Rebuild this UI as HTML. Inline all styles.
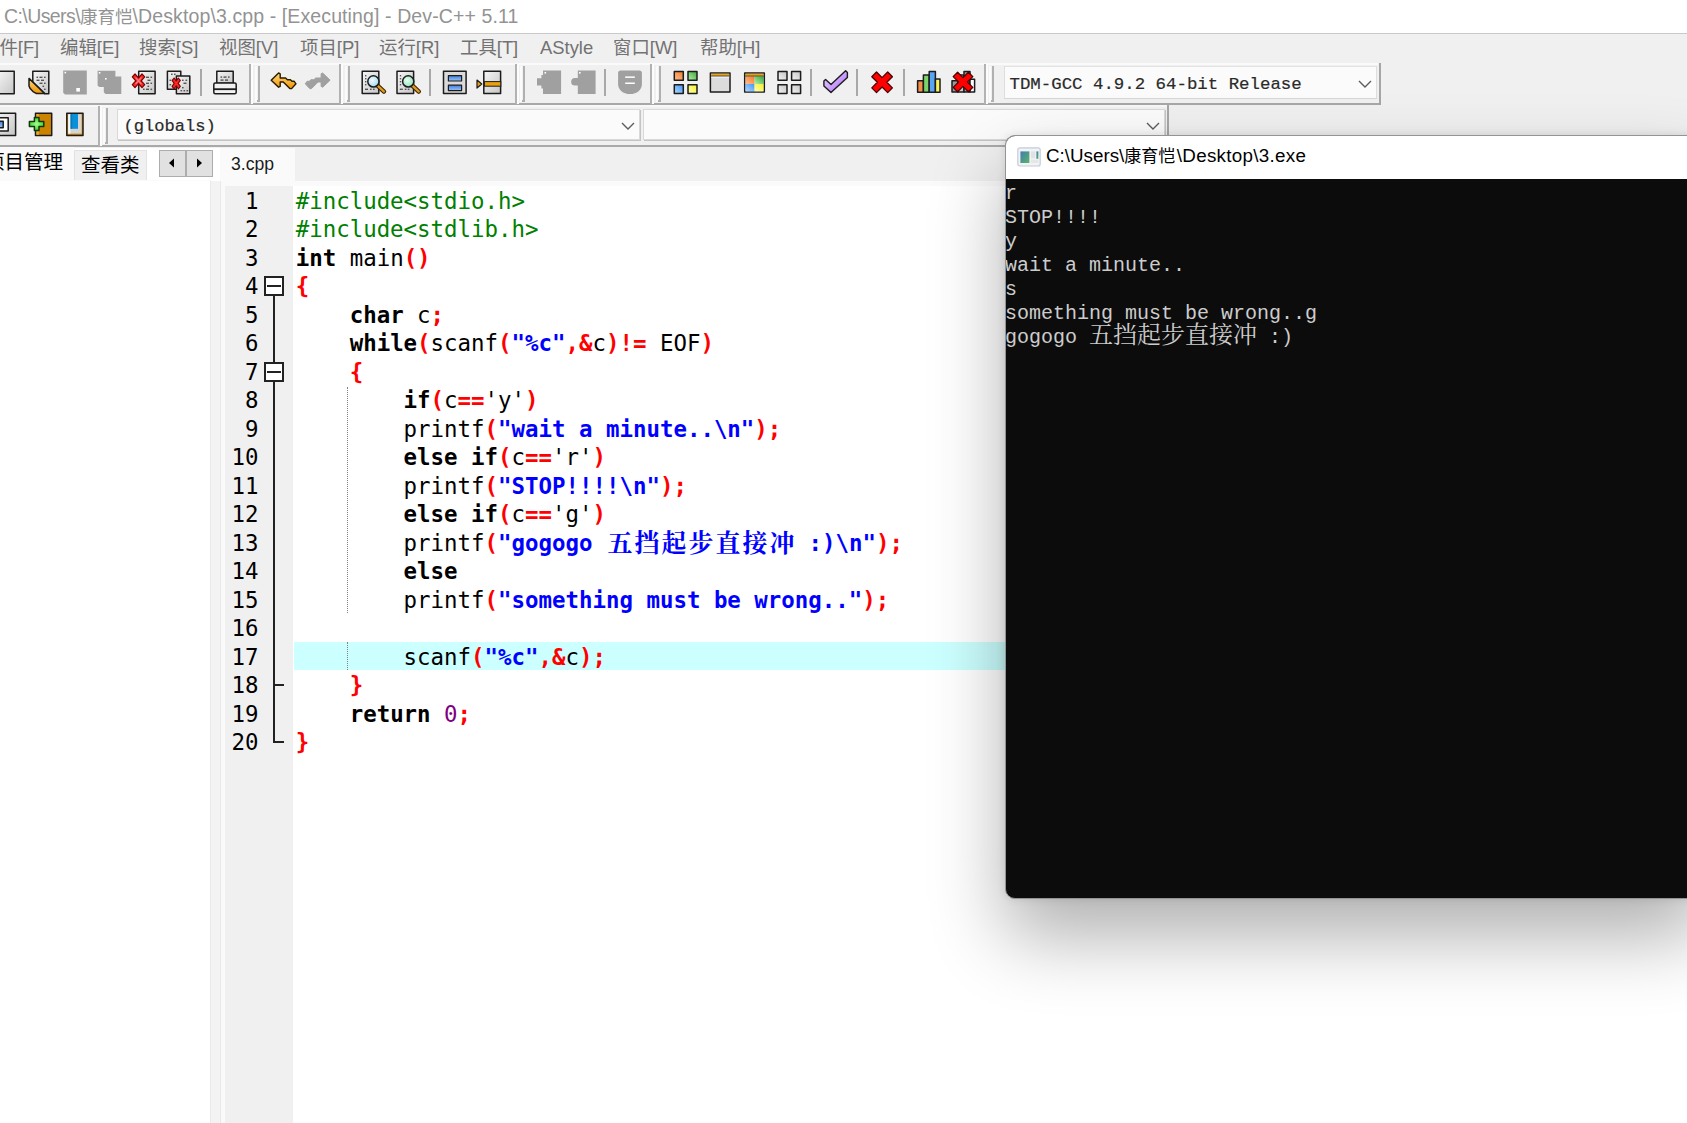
<!DOCTYPE html>
<html lang="zh-CN">
<head>
<meta charset="utf-8">
<title>Dev-C++ 5.11</title>
<style>
html,body{margin:0;padding:0}
body{width:1687px;height:1123px;overflow:hidden;position:relative;background:#fff;font-family:"Liberation Sans","Noto Sans CJK SC",sans-serif}
.abs{position:absolute}
#title{position:absolute;left:0;top:0;width:1687px;height:33px;background:#fff}
#title span{position:absolute;left:4px;top:3px;font-size:19.5px;line-height:26px;color:#939393;white-space:pre}
#chrome{position:absolute;left:0;top:33px;width:1687px;height:114px;background:#f0f0f0;border-top:1px solid #c9c9c9}
#title i,#contitle i{font-style:normal}
#title .tc{font-size:17.5px}
#contitle .tc{font-size:17px}
#menu{position:absolute;left:0;top:34px;height:29px;width:900px;font-size:18.4px;line-height:28px;color:#727272;white-space:pre}
#menu span{position:absolute;top:0}
.hl{position:absolute;height:1px}
.vl{position:absolute;width:1px}
.grip{position:absolute;width:5px;height:36px;border-left:2px solid #fbfbfb;border-right:2px solid #b0b0b0;box-sizing:border-box}
.grip:after{content:"";position:absolute;left:0;bottom:0;width:2px;height:2px;background:#b0b0b0}
.ico{position:absolute;width:24px;height:24px}
.sep{position:absolute;width:2px;height:27px;background:#a8a8a8}
.combo{position:absolute;background:#fbfbfb;border:1px solid #d9d9d9;box-sizing:border-box;font-family:"Liberation Mono",monospace;font-weight:normal;font-size:15px;color:#2a2a2a;white-space:pre;-webkit-text-stroke:0.2px #2a2a2a}
.combo span{position:absolute;left:8px;top:0;line-height:28px}
#left{position:absolute;left:0;top:181px;width:210px;height:942px;background:#fff}
#split{position:absolute;left:210px;top:181px;width:11px;height:942px;background:#f3f3f3;border-left:1.5px solid #e9e9e9;border-right:1.5px solid #e9e9e9;box-sizing:border-box}
#split2{position:absolute;left:220.5px;top:148px;width:5px;height:975px;background:#fafafa}
#gutter{position:absolute;left:225px;top:186px;width:67.5px;height:937px;background:#f0f0f0}
#editor{position:absolute;left:292.5px;top:186px;width:1400px;height:937px;background:#fff}
#cur{position:absolute;left:294px;top:642px;width:1400px;height:28px;background:#ccffff}
.ln,.num{position:absolute;font-family:"DejaVu Sans Mono","Noto Sans CJK SC",monospace;font-size:22.425px;line-height:28px;height:28px;white-space:pre;color:#000}
.ln{left:295.7px}
.num{left:225px;width:33.5px;text-align:right}
.k{color:#000}
.s{color:#ff0000}
.q{color:#0000ff}
.p{color:#008000}
.n{color:#800080}
.cj{font-family:"Noto Serif CJK SC",serif;font-size:25px;letter-spacing:2px;font-weight:bold;line-height:0;position:relative;top:1px;left:1.5px}
#con{position:absolute;left:1005px;top:134.5px;width:700px;height:764.5px;background:#0c0c0c;border:1px solid #949494;border-radius:10px;box-sizing:border-box;overflow:hidden;box-shadow:0 38px 74px rgba(0,0,0,.31),0 0 8px rgba(0,0,0,.1)}
#contitle{position:absolute;left:0;top:0;width:100%;height:43px;background:#fff}
#contitle span{position:absolute;left:40px;top:8.5px;font-size:18.8px;line-height:24px;color:#000;white-space:pre}
#conout{position:absolute;left:-1px;top:46.5px;font-family:"Liberation Mono","Noto Serif CJK SC",monospace;font-size:20px;line-height:24px;color:#cccccc;white-space:pre}
#conout .cj{font-family:"Noto Serif CJK SC",serif;font-size:24px;font-weight:normal;letter-spacing:0;line-height:0;position:static}
</style>
</head>
<body>
<div id="title"><span><i style="letter-spacing:-0.58px">C:\Users\</i><i class="tc">康育恺</i><i style="letter-spacing:0.11px">\Desktop\3.cpp - [Executing] - Dev-C++ 5.11</i></span></div>
<div id="chrome"></div>
<div id="menu"><span style="left:-19px">文件[F]</span><span style="left:60px">编辑[E]</span><span style="left:139px">搜索[S]</span><span style="left:219px">视图[V]</span><span style="left:300px">项目[P]</span><span style="left:379px">运行[R]</span><span style="left:460px">工具[T]</span><span style="left:540px">AStyle</span><span style="left:613px">窗口[W]</span><span style="left:700px">帮助[H]</span></div>
<!-- toolbar rows -->
<div class="hl" style="left:0;top:63px;width:1378px;height:2px;background:#fafafa"></div>
<div class="hl" style="left:0;top:103px;width:1380px;height:2px;background:#a8a8a8"></div>
<div class="hl" style="left:0;top:105px;width:1167px;height:2px;background:#f8f8f8"></div>
<div class="hl" style="left:0;top:145px;width:1687px;height:2px;background:#a9a9a9"></div>
<!-- band ends row 1 -->
<div class="vl" style="left:249px;top:64px;width:2px;height:40px;background:#b2b2b2"></div><div class="vl" style="left:251px;top:64px;width:1.5px;height:40px;background:#fcfcfc"></div>
<div class="vl" style="left:339px;top:64px;width:2px;height:40px;background:#b2b2b2"></div><div class="vl" style="left:341px;top:64px;width:1.5px;height:40px;background:#fcfcfc"></div>
<div class="vl" style="left:515px;top:64px;width:2px;height:40px;background:#b2b2b2"></div><div class="vl" style="left:517px;top:64px;width:1.5px;height:40px;background:#fcfcfc"></div>
<div class="vl" style="left:650px;top:64px;width:2px;height:40px;background:#b2b2b2"></div><div class="vl" style="left:652px;top:64px;width:1.5px;height:40px;background:#fcfcfc"></div>
<div class="vl" style="left:984px;top:64px;width:2px;height:40px;background:#b2b2b2"></div><div class="vl" style="left:986px;top:64px;width:1.5px;height:40px;background:#fcfcfc"></div>
<div class="vl" style="left:1378.5px;top:63px;width:2px;height:42px;background:#a6a6a6"></div>
<!-- band ends row 2 -->
<div class="vl" style="left:98px;top:106px;width:2px;height:40px;background:#b2b2b2"></div><div class="vl" style="left:100px;top:106px;width:1.5px;height:40px;background:#fcfcfc"></div>
<div class="vl" style="left:1166.5px;top:105px;width:2px;height:41px;background:#a6a6a6"></div>
<!-- grips -->
<div class="grip" style="left:255px;top:66px"></div>
<div class="grip" style="left:344.5px;top:66px"></div>
<div class="grip" style="left:520px;top:66px"></div>
<div class="grip" style="left:656px;top:66px"></div>
<div class="grip" style="left:989px;top:66px"></div>
<div class="grip" style="left:103px;top:108px"></div>
<!-- separators -->
<div class="sep" style="left:200px;top:69px"></div>
<div class="sep" style="left:429px;top:69px"></div>
<div class="sep" style="left:604px;top:69px"></div>
<div class="sep" style="left:810px;top:69px"></div>
<div class="sep" style="left:856px;top:69px"></div>
<div class="sep" style="left:903px;top:69px"></div>
<!-- combos -->
<div class="combo" style="left:1003.5px;top:66px;width:373px;height:33px;border-color:#e2e2e2 #dedede #d6d6d6 #dedede"><span style="left:5px;top:3.5px;font-size:17.4px">TDM-GCC 4.9.2 64-bit Release</span><svg class="abs" style="left:353px;top:13px" width="14" height="9" viewBox="0 0 14 9"><path d="M1 1 L7 7 L13 1" fill="none" stroke="#5c5c5c" stroke-width="1.4"/></svg></div>
<div class="combo" style="left:117px;top:109px;width:523px;height:31px;box-shadow:1px 1px 0 #c4c4c4"><span style="left:5.5px;top:2.5px;font-size:17.1px">(globals)</span><svg class="abs" style="left:503px;top:12px" width="14" height="9" viewBox="0 0 14 9"><path d="M1 1 L7 7 L13 1" fill="none" stroke="#5c5c5c" stroke-width="1.4"/></svg></div>
<div class="combo" style="left:643px;top:109px;width:522px;height:31px;box-shadow:1px 1px 0 #c4c4c4"><svg class="abs" style="left:502px;top:12px" width="14" height="9" viewBox="0 0 14 9"><path d="M1 1 L7 7 L13 1" fill="none" stroke="#5c5c5c" stroke-width="1.4"/></svg></div>
<svg class="abs" style="left:0;top:63px" width="1000" height="84" viewBox="0 63 1000 84">
<defs>
<linearGradient id="gDoc" x1="0" y1="0" x2="1" y2="1"><stop offset="0" stop-color="#f6f6f6"/><stop offset="1" stop-color="#c6c6c6"/></linearGradient>
<linearGradient id="gOr" x1="0" y1="0" x2="0" y2="1"><stop offset="0" stop-color="#ffd880"/><stop offset="1" stop-color="#f09400"/></linearGradient>
<linearGradient id="gBlue" x1="0" y1="0" x2="0" y2="1"><stop offset="0" stop-color="#3f7fe0"/><stop offset="1" stop-color="#9cc4f8"/></linearGradient>
<radialGradient id="gLensB" cx=".4" cy=".4" r=".7"><stop offset="0" stop-color="#f2fbff"/><stop offset="1" stop-color="#9ad6ee"/></radialGradient>
<radialGradient id="gLensG" cx=".4" cy=".4" r=".7"><stop offset="0" stop-color="#e8fff2"/><stop offset="1" stop-color="#86e0b2"/></radialGradient>
<linearGradient id="sqO" x1="1" y1="0" x2="0" y2="1"><stop offset="0" stop-color="#f47a2a"/><stop offset="1" stop-color="#ffc090"/></linearGradient>
<linearGradient id="sqG" x1="1" y1="0" x2="0" y2="1"><stop offset="0" stop-color="#3aa838"/><stop offset="1" stop-color="#b4f0a8"/></linearGradient>
<linearGradient id="sqB" x1="1" y1="0" x2="0" y2="1"><stop offset="0" stop-color="#3f96f4"/><stop offset="1" stop-color="#b4d8ff"/></linearGradient>
<linearGradient id="sqY" x1="1" y1="0" x2="0" y2="1"><stop offset="0" stop-color="#f4f030"/><stop offset="1" stop-color="#ffffa8"/></linearGradient>
<linearGradient id="sqW" x1="1" y1="0" x2="0" y2="1"><stop offset="0" stop-color="#c4c4c4"/><stop offset="1" stop-color="#f4f4f4"/></linearGradient>
<linearGradient id="gChk" x1="0" y1="0" x2="1" y2="1"><stop offset="0" stop-color="#e6ccff"/><stop offset=".45" stop-color="#d0a8ff"/><stop offset="1" stop-color="#a860f8"/></linearGradient>
<radialGradient id="gPlus" cx=".5" cy=".5" r=".6"><stop offset="0" stop-color="#a0ff90"/><stop offset="1" stop-color="#2fc81a"/></radialGradient>
</defs>
<g stroke="#1c1c1c" stroke-width="1.5" stroke-linejoin="round">
<!-- 1 new -->
<rect x="-3" y="71.2" width="17.2" height="22.5" fill="url(#gDoc)"/>
<!-- 2 open -->
<path d="M32.8 82 V71.2 H48.8 V93.7 H44.6 Z" fill="url(#gDoc)"/>
<path d="M29 78.4 L44.8 93.6 L36.6 93.6 L33 91.6 L30.2 88.6 L29 86 Z" fill="url(#gOr)"/>
<!-- 5 close -->
<rect x="138.7" y="71.2" width="16.4" height="22.5" fill="url(#gDoc)"/>
<!-- 6 close all -->
<rect x="167.4" y="71.2" width="13.4" height="18" fill="url(#gDoc)"/>
<rect x="176.4" y="76" width="13.4" height="17.7" fill="url(#gDoc)"/>
<!-- 7 print -->
<rect x="216.8" y="71.2" width="16.4" height="12" fill="url(#gDoc)"/>
<rect x="213.8" y="83" width="22.4" height="10.8" rx="1.5" fill="#f2f2f2"/>
<path d="M214 89.2 H236" fill="none" stroke-width="1.8"/>
<!-- 10 search -->
<rect x="362.2" y="71.2" width="16.6" height="22.2" fill="url(#gDoc)"/>
<rect x="397" y="71.2" width="16.6" height="22.2" fill="url(#gDoc)"/>
<!-- 12 bars -->
<rect x="443.5" y="71.2" width="22.6" height="22.2" fill="#dadada"/>
<rect x="448.4" y="75.6" width="13.2" height="5.4" fill="url(#gBlue)" stroke-width="1.2"/>
<rect x="448.4" y="85.2" width="13.2" height="5.4" fill="url(#gBlue)" stroke-width="1.2"/>
<!-- 13 goto -->
<rect x="483.8" y="71.2" width="16.8" height="22.2" fill="url(#gDoc)"/>
<!-- compile 4 squares -->
<rect x="674.3" y="71.4" width="9" height="8.8" fill="url(#sqO)"/>
<rect x="688" y="71.4" width="9" height="8.8" fill="url(#sqG)"/>
<rect x="674.3" y="84.8" width="9" height="8.8" fill="url(#sqB)"/>
<rect x="688" y="84.8" width="9" height="8.8" fill="url(#sqY)"/>
<!-- run window -->
<rect x="710.4" y="72.9" width="19.6" height="19.2" fill="#dcdcdc"/>
<!-- compile run -->
<rect x="744.7" y="72.9" width="19.6" height="19.2" fill="#dcdcdc"/>
<!-- rebuild -->
<rect x="778" y="71.4" width="9" height="8.8" fill="url(#sqW)"/>
<rect x="791.6" y="71.4" width="9" height="8.8" fill="url(#sqW)"/>
<rect x="778" y="84.8" width="9" height="8.8" fill="url(#sqW)"/>
<rect x="791.6" y="84.8" width="9" height="8.8" fill="url(#sqW)"/>
<!-- check -->
<path d="M823.9 81 L825.6 79.4 L831 84.6 L845.6 70.7 L847.4 72.6 L847.4 77.4 L831 92.5 L823.9 86 Z" fill="url(#gChk)" stroke-width="1.4"/>
<!-- chart -->
<rect x="917.6" y="80.8" width="5.8" height="11.4" fill="#f59048"/>
<rect x="923.4" y="75" width="5.8" height="17.2" fill="#7ad468"/>
<rect x="929.2" y="71.5" width="6.2" height="20.7" fill="#5aa4f4"/>
<rect x="935.4" y="79" width="4.6" height="13.2" fill="#f8f458"/>
<!-- chart x -->
<rect x="952" y="80.8" width="6" height="11.2" fill="#9a9a9a"/>
<rect x="958" y="75" width="6" height="17" fill="#c8c8c8"/>
<rect x="964" y="71.4" width="6" height="20.6" fill="#9a9a9a"/>
<rect x="970" y="79.2" width="4.6" height="12.8" fill="#ffffff"/>
<!-- row2 A -->
<rect x="-8" y="113.2" width="23.6" height="22.4" fill="url(#gDoc)"/>
<rect x="-8" y="117.8" width="16.2" height="13.2" fill="#fff"/>
<rect x="-8" y="121.2" width="11.2" height="6.6" fill="url(#gBlue)"/>
<!-- row2 B book -->
<rect x="35.5" y="113.2" width="16.2" height="22.4" fill="#cc8400"/>
<!-- row2 C bookmark -->
<rect x="66.8" y="113.2" width="16.2" height="22.4" fill="#d68c00"/>
</g>
<!-- open: doc text dots -->
<g fill="#555">
<rect x="36.5" y="76.6" width="1.6" height="1.4"/><rect x="39.5" y="76.6" width="3" height="1.4"/><rect x="44" y="76.6" width="1.6" height="1.4"/>
<rect x="36.5" y="79.6" width="3" height="1.4"/><rect x="41" y="79.6" width="3" height="1.4"/>
<rect x="39.5" y="82.6" width="3" height="1.4"/><rect x="44" y="82.6" width="1.6" height="1.4"/>
<rect x="42.5" y="85.6" width="1.6" height="1.4"/><rect x="44" y="88.6" width="1.6" height="1.4"/>
<!-- close doc dots -->
<rect x="146" y="76.6" width="3" height="1.4"/><rect x="150.5" y="76.6" width="1.6" height="1.4"/>
<rect x="147.5" y="79.6" width="3" height="1.4"/>
<rect x="146" y="82.6" width="3" height="1.4"/><rect x="150.5" y="82.6" width="1.6" height="1.4"/>
<rect x="147.5" y="85.6" width="1.6" height="1.4"/>
<rect x="143" y="88.6" width="1.6" height="1.4"/><rect x="146" y="88.6" width="3" height="1.4"/><rect x="150.5" y="88.6" width="1.6" height="1.4"/>
<!-- close all dots -->
<rect x="171" y="73.6" width="1.6" height="1.4"/><rect x="174" y="73.6" width="1.6" height="1.4"/>
<rect x="169.5" y="79.6" width="1.6" height="1.4"/><rect x="169.5" y="84" width="1.6" height="1.4"/>
<rect x="182" y="79.6" width="1.6" height="1.4"/><rect x="185.5" y="79.6" width="1.6" height="1.4"/>
<rect x="183.5" y="82.6" width="3" height="1.4"/>
<rect x="182" y="87" width="1.6" height="1.4"/>
<rect x="180.5" y="90" width="1.6" height="1.4"/><rect x="183.5" y="90" width="1.6" height="1.4"/><rect x="186.5" y="90" width="1.6" height="1.4"/>
<!-- print dots -->
<rect x="220.5" y="76.4" width="1.6" height="1.4"/><rect x="223.5" y="76.4" width="3" height="1.4"/><rect x="228" y="76.4" width="1.6" height="1.4"/>
<rect x="220.5" y="79.4" width="3" height="1.4"/><rect x="225" y="79.4" width="3" height="1.4"/>
<!-- search dots -->
<rect x="365" y="75" width="1.4" height="1.4"/><rect x="365" y="78" width="1.4" height="1.4"/><rect x="365" y="81" width="1.4" height="1.4"/><rect x="365" y="84" width="1.4" height="1.4"/>
<rect x="365" y="88.6" width="3" height="1.4"/><rect x="370" y="88.6" width="1.6" height="1.4"/><rect x="373" y="88.6" width="1.6" height="1.4"/>
<rect x="399.8" y="75" width="1.4" height="1.4"/><rect x="399.8" y="78" width="1.4" height="1.4"/><rect x="399.8" y="81" width="1.4" height="1.4"/><rect x="399.8" y="84" width="1.4" height="1.4"/>
<rect x="399.8" y="88.6" width="3" height="1.4"/><rect x="404.8" y="88.6" width="1.6" height="1.4"/><rect x="407.8" y="88.6" width="1.6" height="1.4"/>
</g>
<!-- save disabled -->
<g fill="#a0a0a0">
<path d="M63.2 70.4 H86.8 V94.5 H65 L63.2 92.7 Z"/>
<path d="M97.6 70.7 H115.4 V76.6 H121.3 V94 H105.5 L103.8 92.3 V87 H99.2 L97.6 85.4 Z"/>
<!-- redo -->
<path transform="translate(601.3,0) scale(-1,1)" d="M271.2 80.2 L278.6 73 L280.2 73.8 L280.2 78 L285.6 78 L287.4 79.7 L290.4 79.7 L292 81.3 L294.2 81.3 L296 83.8 L291.6 88.6 L289.8 88.6 L284.8 83.6 L283.2 82 L280.2 82 L280.2 86.4 L278.6 87.2 Z" stroke="#a0a0a0" stroke-width="1" stroke-linejoin="round"/>
<!-- disabled bookmark icons -->
<path d="M543 70.4 H561.1 V94.1 H543 V88.4 L541.4 88.4 L541.4 85.4 L537 85.4 V78.2 L541.4 78.2 L541.4 75 L543 75 Z"/>
<path d="M577.8 70.4 H595.6 V94.1 H577.8 V85.6 H575 A3.85 3.85 0 0 1 575 77.9 H577.8 Z"/>
<path d="M618.1 73 A2.6 2.6 0 0 1 620.7 70.4 H639.3 A2.6 2.6 0 0 1 641.9 73 V84 C641.9 90 637 94.1 630 94.1 C623 94.1 618.1 90 618.1 84 Z"/>
</g>
<g fill="#fff">
<rect x="64.5" y="71.8" width="1.6" height="1.6"/><rect x="76.3" y="88" width="3.6" height="3.6"/>
<rect x="98.8" y="72" width="1.6" height="1.6"/><rect x="105" y="78" width="1.6" height="1.6"/>
<rect x="544.5" y="72" width="1.6" height="1.6"/><rect x="579" y="72" width="1.6" height="1.6"/>
<rect x="625.2" y="76.4" width="9.6" height="1.5"/><rect x="625.2" y="82.5" width="9.6" height="1.5"/>
</g>
<!-- red X on close -->
<g stroke-linejoin="round">
<path d="M132.3 76.9 L135.0 74.0 L138.5 77.9 L142.0 74.0 L144.7 76.9 L141.2 80.8 L144.7 84.7 L142.0 87.6 L138.5 83.7 L135.0 87.6 L132.3 84.7 L135.8 80.8 Z" fill="#ff2626" stroke="#7a0000" stroke-width="1.2"/>
<path d="M135.6 77.6 L141.4 84 M141.4 77.6 L135.6 84" stroke="#ff8080" stroke-width="1.3" fill="none"/>
<path d="M172.1 80.4 L174.1 78.0 L176.2 81.0 L178.3 78.0 L180.3 80.4 L178.2 83.4 L180.3 86.4 L178.3 88.8 L176.2 85.8 L174.1 88.8 L172.1 86.4 L174.2 83.4 Z" fill="#ff2626" stroke="#7a0000" stroke-width="1.1"/>
<!-- big red X -->
<path d="M871.8 76.7 L876.5 72.0 L882.1 77.6 L887.7 72.0 L892.4 76.7 L886.8 82.3 L892.4 87.9 L887.7 92.6 L882.1 87.0 L876.5 92.6 L871.8 87.9 L877.4 82.3 Z" fill="#ff0000" stroke="#4a0000" stroke-width="1.3"/>
<!-- chart X -->
<path d="M953.2 76.6 L957.6 72.2 L963.0 77.6 L968.4 72.2 L972.8 76.6 L967.4 82.0 L972.8 87.4 L968.4 91.8 L963.0 86.4 L957.6 91.8 L953.2 87.4 L958.6 82.0 Z" fill="#ff0000" stroke="#4a0000" stroke-width="1.3"/>
</g>
<!-- undo -->
<path d="M271.2 80.2 L278.6 73 L280.2 73.8 L280.2 78 L285.6 78 L287.4 79.7 L290.4 79.7 L292 81.3 L294.2 81.3 L296 83.8 L291.6 88.6 L289.8 88.6 L284.8 83.6 L283.2 82 L280.2 82 L280.2 86.4 L278.6 87.2 Z" fill="url(#gOr)" stroke="#2a1a00" stroke-width="1.4" stroke-linejoin="round"/>
<!-- lenses -->
<g stroke="#1c1c1c">
<path d="M377.6 85.6 L384 91.6" stroke="#3a2400" stroke-width="4.4" stroke-linecap="round"/>
<path d="M377.6 85.6 L384 91.6" stroke="#e09a20" stroke-width="2.2" stroke-linecap="round"/>
<circle cx="373.4" cy="81.4" r="5.6" fill="url(#gLensB)" stroke-width="1.5"/>
<path d="M412.4 85.6 L418.8 91.6" stroke="#3a2400" stroke-width="4.4" stroke-linecap="round"/>
<path d="M412.4 85.6 L418.8 91.6" stroke="#e09a20" stroke-width="2.2" stroke-linecap="round"/>
<circle cx="408.2" cy="81.4" r="5.6" fill="url(#gLensG)" stroke-width="1.5"/>
</g>
<!-- goto line bar -->
<rect x="484.4" y="81.6" width="16.4" height="4.6" fill="#e8a010" stroke="#1c1c1c" stroke-width="1"/>
<path d="M477 80 L481.8 84 L477 88 Z" fill="#e8a010" stroke="#1c1c1c" stroke-width="1.2" stroke-linejoin="round"/>
<!-- run window title -->
<rect x="711.2" y="73.7" width="18" height="1.9" fill="#f0a000"/>
<rect x="711.2" y="75.6" width="18" height="1" fill="#1c1c1c"/>
<rect x="711.2" y="76.6" width="18" height="1" fill="#f8f8f8"/>
<rect x="745.5" y="73.7" width="18" height="1.9" fill="#f0a000"/>
<rect x="745.5" y="75.6" width="18" height="1" fill="#1c1c1c"/>
<rect x="745.5" y="76.6" width="9" height="7.4" fill="url(#sqO)"/>
<rect x="754.5" y="76.6" width="9" height="7.4" fill="url(#sqG)"/>
<rect x="745.5" y="84" width="9" height="7.4" fill="url(#sqB)"/>
<rect x="754.5" y="84" width="9" height="7.4" fill="url(#sqY)"/>
<!-- book + plus -->
<rect x="36.4" y="114" width="2.4" height="20.8" fill="#e8a838"/>
<path d="M34.4 117.6 H39 V121.6 H43.8 V126.4 H39 V130.4 H34.4 V126.4 H29.4 V121.6 H34.4 Z" fill="url(#gPlus)" stroke="#123808" stroke-width="1.5" stroke-linejoin="round"/>
<!-- bookmark inner -->
<path d="M68.2 114.2 H81.6 V133.6 H68.2 Z" fill="#d4d4d4"/>
<path d="M68.2 114.2 H70.4 V133.6 H68.2 Z" fill="#f6f6f6"/>
<rect x="70.6" y="114" width="7.4" height="14.8" fill="#0a90d8"/>
<rect x="70.6" y="114" width="1.6" height="14.8" fill="#0878b8"/>
</svg>


<!-- left tabs -->
<div class="abs" style="left:0;top:147px;width:74px;height:36px;background:#fafafa"></div>
<div class="abs" style="left:74px;top:180px;width:138px;height:1px;background:#fafafa"></div>
<div class="abs" style="left:-15px;top:149px;font-size:19.5px;line-height:26px;color:#000;white-space:pre">项目管理</div>
<div class="abs" style="left:74px;top:150px;width:73px;height:30px;background:#f0f0f0;border:1px solid #e2e2e2;border-bottom:none;box-sizing:border-box"></div>
<div class="abs" style="left:81px;top:152px;font-size:19.5px;line-height:26px;color:#000;white-space:pre">查看类</div>
<div class="abs" style="left:159px;top:150px;width:54px;height:27px;background:#e1e1e1;border:1px solid #adadad;box-sizing:border-box"></div>
<div class="abs" style="left:185px;top:150px;width:2px;height:27px;background:#adadad"></div>
<svg class="abs" style="left:168px;top:158px" width="8" height="10" viewBox="0 0 8 10"><path d="M6 0.5 L1 5 L6 9.5Z" fill="#000"/></svg>
<svg class="abs" style="left:195px;top:158px" width="8" height="10" viewBox="0 0 8 10"><path d="M2 0.5 L7 5 L2 9.5Z" fill="#000"/></svg>
<!-- editor tab -->
<div class="abs" style="left:220px;top:148px;width:1500px;height:36px;background:#f0f0f0"></div>
<div class="abs" style="left:220px;top:148px;width:75px;height:38px;background:#fafafa"></div>
<div class="abs" style="left:295px;top:181px;width:1400px;height:5px;background:#fafafa"></div>
<div class="abs" style="left:231px;top:151px;font-size:17.6px;line-height:26px;color:#1a1a1a;white-space:pre">3.cpp</div>

<div id="left"></div>
<div id="split"></div>
<div id="split2"></div>
<div id="gutter"></div>
<div id="editor"></div>
<div id="cur"></div>
<div class="abs" style="left:273px;top:286px;width:2px;height:457px;background:#222"></div>
<div class="abs" style="left:264px;top:276px;width:20px;height:20px;border:2px solid #222;background:#fff;box-sizing:border-box"></div>
<div class="abs" style="left:267px;top:285px;width:14px;height:2px;background:#222"></div>
<div class="abs" style="left:264px;top:361.5px;width:20px;height:20px;border:2px solid #222;background:#fff;box-sizing:border-box"></div>
<div class="abs" style="left:267px;top:370.5px;width:14px;height:2px;background:#222"></div>
<div class="abs" style="left:273px;top:684px;width:11px;height:2px;background:#222"></div>
<div class="abs" style="left:273px;top:741px;width:11px;height:2px;background:#222"></div>
<div class="abs" style="left:347px;top:387px;width:0;height:226px;border-left:1px dotted #808080"></div>
<div class="abs" style="left:347px;top:642px;width:0;height:28px;border-left:1px dotted #808080"></div>

<div class="num" style="top:186.80px">1</div>
<div class="num" style="top:215.30px">2</div>
<div class="num" style="top:243.80px">3</div>
<div class="num" style="top:272.30px">4</div>
<div class="num" style="top:300.80px">5</div>
<div class="num" style="top:329.30px">6</div>
<div class="num" style="top:357.80px">7</div>
<div class="num" style="top:386.30px">8</div>
<div class="num" style="top:414.80px">9</div>
<div class="num" style="top:443.30px">10</div>
<div class="num" style="top:471.80px">11</div>
<div class="num" style="top:500.30px">12</div>
<div class="num" style="top:528.80px">13</div>
<div class="num" style="top:557.30px">14</div>
<div class="num" style="top:585.80px">15</div>
<div class="num" style="top:614.30px">16</div>
<div class="num" style="top:642.80px">17</div>
<div class="num" style="top:671.30px">18</div>
<div class="num" style="top:699.80px">19</div>
<div class="num" style="top:728.30px">20</div>
<div class="ln" style="top:186.80px"><span class="p">#include&lt;stdio.h&gt;</span></div>
<div class="ln" style="top:215.30px"><span class="p">#include&lt;stdlib.h&gt;</span></div>
<div class="ln" style="top:243.80px"><b class="k">int</b> main<b class="s">()</b></div>
<div class="ln" style="top:272.30px"><b class="s">{</b></div>
<div class="ln" style="top:300.80px">    <b class="k">char</b> c<b class="s">;</b></div>
<div class="ln" style="top:329.30px">    <b class="k">while</b><b class="s">(</b>scanf<b class="s">(</b><b class="q">"%c"</b><b class="s">,&amp;</b>c<b class="s">)!=</b> EOF<b class="s">)</b></div>
<div class="ln" style="top:357.80px">    <b class="s">{</b></div>
<div class="ln" style="top:386.30px">        <b class="k">if</b><b class="s">(</b>c<b class="s">==</b>'y'<b class="s">)</b></div>
<div class="ln" style="top:414.80px">        printf<b class="s">(</b><b class="q">"wait a minute..\n"</b><b class="s">);</b></div>
<div class="ln" style="top:443.30px">        <b class="k">else</b> <b class="k">if</b><b class="s">(</b>c<b class="s">==</b>'r'<b class="s">)</b></div>
<div class="ln" style="top:471.80px">        printf<b class="s">(</b><b class="q">"STOP!!!!\n"</b><b class="s">);</b></div>
<div class="ln" style="top:500.30px">        <b class="k">else</b> <b class="k">if</b><b class="s">(</b>c<b class="s">==</b>'g'<b class="s">)</b></div>
<div class="ln" style="top:528.80px">        printf<b class="s">(</b><b class="q">"gogogo </b><b class="q cj">五挡起步直接冲</b><b class="q"> :)\n"</b><b class="s">);</b></div>
<div class="ln" style="top:557.30px">        <b class="k">else</b></div>
<div class="ln" style="top:585.80px">        printf<b class="s">(</b><b class="q">"something must be wrong.."</b><b class="s">);</b></div>
<div class="ln" style="top:614.30px">&nbsp;</div>
<div class="ln" style="top:642.80px">        scanf<b class="s">(</b><b class="q">"%c"</b><b class="s">,&amp;</b>c<b class="s">);</b></div>
<div class="ln" style="top:671.30px">    <b class="s">}</b></div>
<div class="ln" style="top:699.80px">    <b class="k">return</b> <span class="n">0</span><b class="s">;</b></div>
<div class="ln" style="top:728.30px"><b class="s">}</b></div>
<div id="con">
<div id="contitle"><svg class="abs" style="left:11px;top:11px" width="24" height="20" viewBox="0 0 24 20"><defs><linearGradient id="gCon" x1="0" y1="0" x2="1" y2="1"><stop offset="0" stop-color="#4a78b4"/><stop offset=".5" stop-color="#4a9a8a"/><stop offset="1" stop-color="#60b468"/></linearGradient></defs><rect x="0.8" y="0.8" width="22.4" height="18.2" rx="2" fill="#f1f3f7" stroke="#c4ccd8" stroke-width="1.2"/><rect x="3.4" y="4.4" width="9" height="11.6" fill="url(#gCon)"/><rect x="14" y="4.4" width="4.2" height="7" fill="#e2e2e2"/><rect x="14" y="12.8" width="7.4" height="3.2" fill="#e6e6e6"/><rect x="19.4" y="4.4" width="2" height="7.4" fill="url(#gCon)"/></svg><span><i>C:\Users\</i><i class="tc">康育恺</i><i style="margin-left:1.5px;letter-spacing:0.3px">\Desktop\3.exe</i></span></div>
<div id="conout">r
STOP!!!!
y
wait a minute..
s
something must be wrong..g
gogogo <span class="cj">五挡起步直接冲</span> :)</div>
</div>
</body>
</html>
